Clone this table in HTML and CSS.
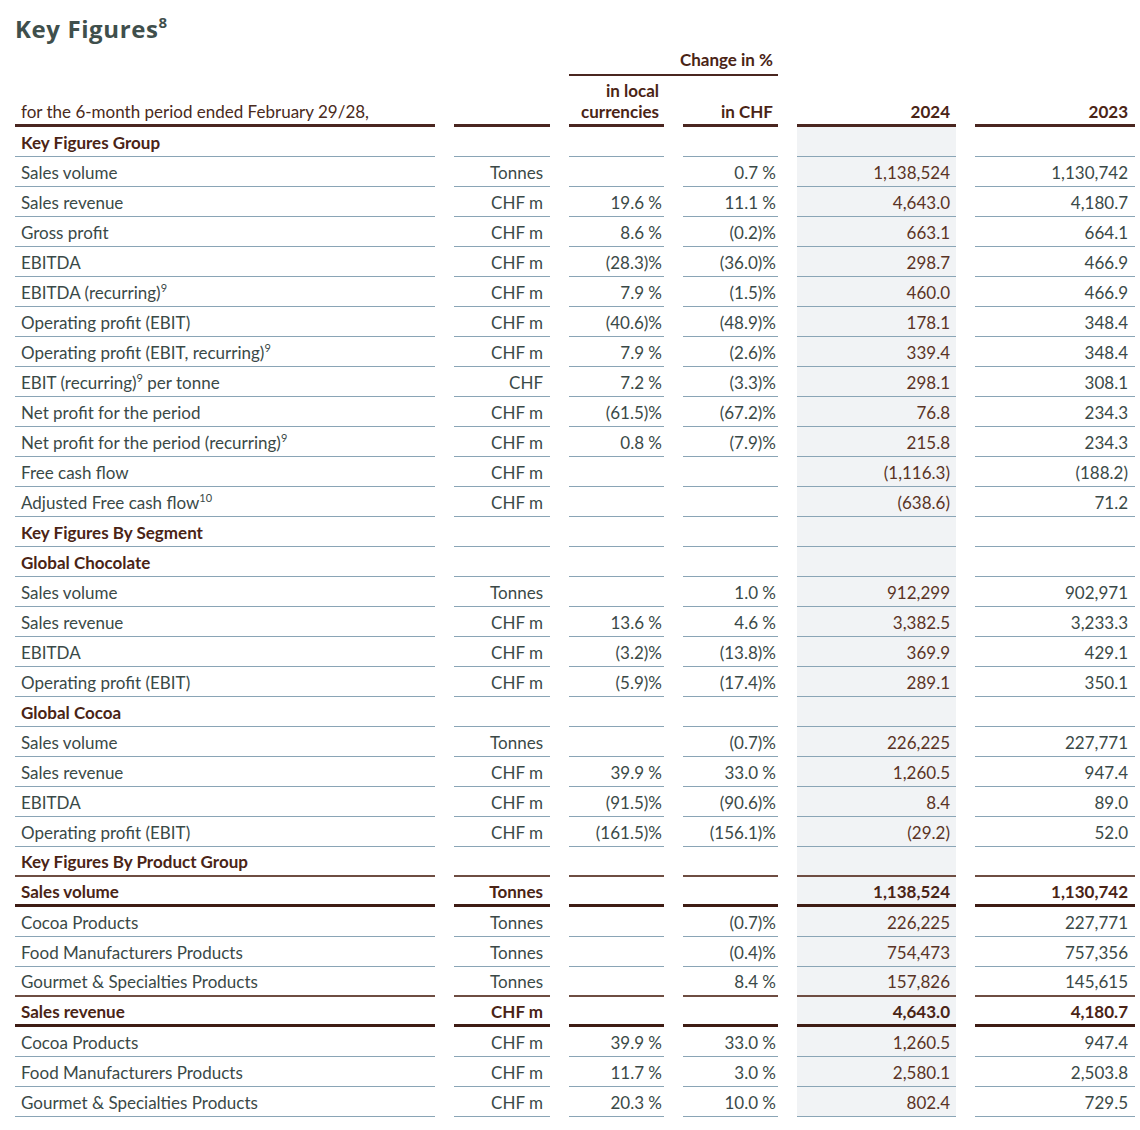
FILE: index.html
```html
<!DOCTYPE html>
<html lang="en">
<head>
<meta charset="utf-8">
<title>Key Figures</title>
<link rel="stylesheet" href="styles.css">
</head>
<body>
<div class="page">
  <h1 class="title">Key Figures<sup>8</sup></h1>
  <table class="kf">
    <colgroup>
      <col class="c-label"><col class="c-unit"><col class="c-pct"><col class="c-pct"><col class="c-cur"><col class="c-prev">
    </colgroup>
    <thead>
      <tr class="h1">
        <th></th><th></th>
        <th colspan="2" class="span">Change in %</th>
        <th></th><th></th>
      </tr>
      <tr class="h2">
        <th class="lbl">for the 6-month period ended February 29/28,</th>
        <th></th>
        <th class="num">in local<br>currencies</th>
        <th class="num">in CHF</th>
        <th class="num cur">2024</th>
        <th class="num prev">2023</th>
      </tr>
    </thead>
    <tbody>
      <tr class="sec"><td class="lbl">Key Figures Group</td><td></td><td></td><td></td><td class="cur"></td><td></td></tr>
      <tr><td class="lbl">Sales volume</td><td class="unit">Tonnes</td><td class="pct"></td><td class="pct">0.7 %</td><td class="cur">1,138,524</td><td class="prev">1,130,742</td></tr>
      <tr><td class="lbl">Sales revenue</td><td class="unit">CHF m</td><td class="pct">19.6 %</td><td class="pct">11.1 %</td><td class="cur">4,643.0</td><td class="prev">4,180.7</td></tr>
      <tr><td class="lbl">Gross profit</td><td class="unit">CHF m</td><td class="pct">8.6 %</td><td class="pct">(0.2)%</td><td class="cur">663.1</td><td class="prev">664.1</td></tr>
      <tr><td class="lbl">EBITDA</td><td class="unit">CHF m</td><td class="pct">(28.3)%</td><td class="pct">(36.0)%</td><td class="cur">298.7</td><td class="prev">466.9</td></tr>
      <tr><td class="lbl">EBITDA (recurring)<sup>9</sup></td><td class="unit">CHF m</td><td class="pct">7.9 %</td><td class="pct">(1.5)%</td><td class="cur">460.0</td><td class="prev">466.9</td></tr>
      <tr><td class="lbl">Operating profit (EBIT)</td><td class="unit">CHF m</td><td class="pct">(40.6)%</td><td class="pct">(48.9)%</td><td class="cur">178.1</td><td class="prev">348.4</td></tr>
      <tr><td class="lbl">Operating profit (EBIT, recurring)<sup>9</sup></td><td class="unit">CHF m</td><td class="pct">7.9 %</td><td class="pct">(2.6)%</td><td class="cur">339.4</td><td class="prev">348.4</td></tr>
      <tr><td class="lbl">EBIT (recurring)<sup>9</sup> per tonne</td><td class="unit">CHF</td><td class="pct">7.2 %</td><td class="pct">(3.3)%</td><td class="cur">298.1</td><td class="prev">308.1</td></tr>
      <tr><td class="lbl">Net profit for the period</td><td class="unit">CHF m</td><td class="pct">(61.5)%</td><td class="pct">(67.2)%</td><td class="cur">76.8</td><td class="prev">234.3</td></tr>
      <tr><td class="lbl">Net profit for the period (recurring)<sup>9</sup></td><td class="unit">CHF m</td><td class="pct">0.8 %</td><td class="pct">(7.9)%</td><td class="cur">215.8</td><td class="prev">234.3</td></tr>
      <tr><td class="lbl">Free cash flow</td><td class="unit">CHF m</td><td class="pct"></td><td class="pct"></td><td class="cur">(1,116.3)</td><td class="prev">(188.2)</td></tr>
      <tr><td class="lbl">Adjusted Free cash flow<sup>10</sup></td><td class="unit">CHF m</td><td class="pct"></td><td class="pct"></td><td class="cur">(638.6)</td><td class="prev">71.2</td></tr>
      <tr class="sec"><td class="lbl">Key Figures By Segment</td><td></td><td></td><td></td><td class="cur"></td><td></td></tr>
      <tr class="sec"><td class="lbl">Global Chocolate</td><td></td><td></td><td></td><td class="cur"></td><td></td></tr>
      <tr><td class="lbl">Sales volume</td><td class="unit">Tonnes</td><td class="pct"></td><td class="pct">1.0 %</td><td class="cur">912,299</td><td class="prev">902,971</td></tr>
      <tr><td class="lbl">Sales revenue</td><td class="unit">CHF m</td><td class="pct">13.6 %</td><td class="pct">4.6 %</td><td class="cur">3,382.5</td><td class="prev">3,233.3</td></tr>
      <tr><td class="lbl">EBITDA</td><td class="unit">CHF m</td><td class="pct">(3.2)%</td><td class="pct">(13.8)%</td><td class="cur">369.9</td><td class="prev">429.1</td></tr>
      <tr><td class="lbl">Operating profit (EBIT)</td><td class="unit">CHF m</td><td class="pct">(5.9)%</td><td class="pct">(17.4)%</td><td class="cur">289.1</td><td class="prev">350.1</td></tr>
      <tr class="sec"><td class="lbl">Global Cocoa</td><td></td><td></td><td></td><td class="cur"></td><td></td></tr>
      <tr><td class="lbl">Sales volume</td><td class="unit">Tonnes</td><td class="pct"></td><td class="pct">(0.7)%</td><td class="cur">226,225</td><td class="prev">227,771</td></tr>
      <tr><td class="lbl">Sales revenue</td><td class="unit">CHF m</td><td class="pct">39.9 %</td><td class="pct">33.0 %</td><td class="cur">1,260.5</td><td class="prev">947.4</td></tr>
      <tr><td class="lbl">EBITDA</td><td class="unit">CHF m</td><td class="pct">(91.5)%</td><td class="pct">(90.6)%</td><td class="cur">8.4</td><td class="prev">89.0</td></tr>
      <tr><td class="lbl">Operating profit (EBIT)</td><td class="unit">CHF m</td><td class="pct">(161.5)%</td><td class="pct">(156.1)%</td><td class="cur">(29.2)</td><td class="prev">52.0</td></tr>
      <tr class="sec before-total"><td class="lbl">Key Figures By Product Group</td><td></td><td></td><td></td><td class="cur"></td><td></td></tr>
      <tr class="total"><td class="lbl">Sales volume</td><td class="unit">Tonnes</td><td class="pct"></td><td class="pct"></td><td class="cur">1,138,524</td><td class="prev">1,130,742</td></tr>
      <tr><td class="lbl">Cocoa Products</td><td class="unit">Tonnes</td><td class="pct"></td><td class="pct">(0.7)%</td><td class="cur">226,225</td><td class="prev">227,771</td></tr>
      <tr><td class="lbl">Food Manufacturers Products</td><td class="unit">Tonnes</td><td class="pct"></td><td class="pct">(0.4)%</td><td class="cur">754,473</td><td class="prev">757,356</td></tr>
      <tr class="before-total"><td class="lbl">Gourmet &amp; Specialties Products</td><td class="unit">Tonnes</td><td class="pct"></td><td class="pct">8.4 %</td><td class="cur">157,826</td><td class="prev">145,615</td></tr>
      <tr class="total"><td class="lbl">Sales revenue</td><td class="unit">CHF m</td><td class="pct"></td><td class="pct"></td><td class="cur">4,643.0</td><td class="prev">4,180.7</td></tr>
      <tr><td class="lbl">Cocoa Products</td><td class="unit">CHF m</td><td class="pct">39.9 %</td><td class="pct">33.0 %</td><td class="cur">1,260.5</td><td class="prev">947.4</td></tr>
      <tr><td class="lbl">Food Manufacturers Products</td><td class="unit">CHF m</td><td class="pct">11.7 %</td><td class="pct">3.0 %</td><td class="cur">2,580.1</td><td class="prev">2,503.8</td></tr>
      <tr><td class="lbl">Gourmet &amp; Specialties Products</td><td class="unit">CHF m</td><td class="pct">20.3 %</td><td class="pct">10.0 %</td><td class="cur">802.4</td><td class="prev">729.5</td></tr>
    </tbody>
  </table>
</div>
</body>
</html>
```

FILE: styles.css
```css
html, body {
  margin: 0;
  padding: 0;
  background: #ffffff;
  overflow: hidden;
}

.page {
  padding: 12px 0 0 15px;
  font-family: Lato, "Open Sans", "Liberation Sans", sans-serif;
  color: #3a4947;
}

.title {
  margin: 0;
  font-family: "Open Sans", "Noto Sans", sans-serif;
  font-weight: 700;
  font-size: 24px;
  line-height: 34px;
  color: #3f4f4c;
  letter-spacing: 0.6px;
}

.title sup {
  font-size: 15px;
  line-height: 0;
  position: relative;
  top: -1px;
  vertical-align: super;
  letter-spacing: 0;
}

.kf {
  border-collapse: separate;
  border-spacing: 19px 0;
  table-layout: fixed;
  width: 1158px;
  margin: 0 -19px;
  font-size: 17px;
}

.c-label { width: 420px; }
.c-unit { width: 96px; }
.c-pct { width: 95px; }
.c-cur { width: 159px; }
.c-prev { width: 160px; }

.kf th, .kf td {
  padding: 0;
  white-space: nowrap;
}

.kf thead th {
  font-weight: 700;
  color: #4a2416;
  text-align: right;
  vertical-align: bottom;
  line-height: 21px;
}

.kf thead .h1 {
  height: 30px;
}

.kf thead .h1 th {
  padding-bottom: 4px;
}

.kf thead .h1 th.span {
  border-bottom: 2px solid #4a2620;
  padding-right: 5px;
}

.kf thead .h2 {
  height: 51px;
}

.kf thead .h2 th {
  border-bottom: 3px solid #4a2620;
  padding-bottom: 2px;
}

.kf thead .h2 th.lbl {
  text-align: left;
  font-weight: 400;
  color: #4a2a20;
  padding-left: 6px;
}

.kf thead .h2 th.num { padding-right: 5px; }
.kf thead .h2 th.cur { padding-right: 6px; }
.kf thead .h2 th.prev { padding-right: 7px; }

.kf tbody tr {
  height: 30px;
}

.kf tbody td {
  border-bottom: 1px solid #8aa5b6;
  text-align: right;
  vertical-align: middle;
  padding-top: 2px;
  line-height: 20px;
}

.kf tbody td.lbl {
  text-align: left;
  padding-left: 6px;
}

.kf tbody td.unit { padding-right: 7px; }
.kf tbody td.pct { padding-right: 2px; }
.kf tbody td.cur {
  background: #f1f3f5;
  color: #5a3325;
  padding-right: 6px;
}
.kf tbody td.prev { padding-right: 7px; }

.kf tbody tr.sec td.lbl {
  font-weight: 700;
  color: #4a2416;
}

.kf tbody tr.before-total td {
  border-bottom: 2px solid #6e4d42;
}

.kf tbody tr.total td {
  font-weight: 700;
  color: #4a2416;
  border-bottom: 3px solid #3e1c14;
}

.kf tbody tr.total td.cur { color: #4a2416; }

.kf sup {
  font-size: 11px;
  line-height: 0;
  vertical-align: 7px;
}
```
